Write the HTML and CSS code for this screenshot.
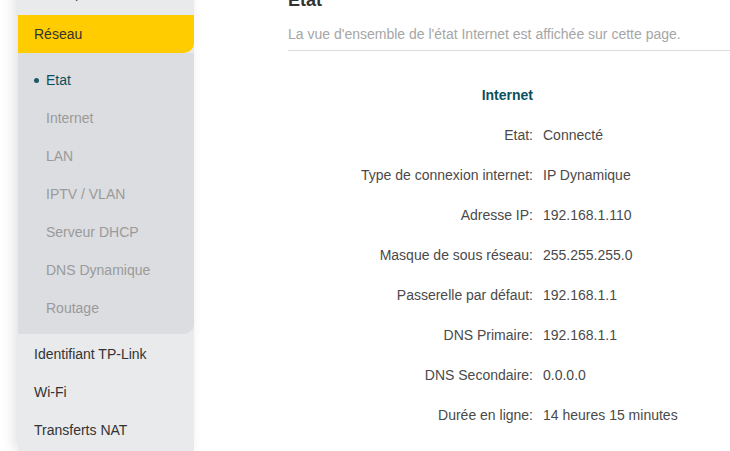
FILE: index.html
```html
<!DOCTYPE html>
<html lang="fr">
<head>
  <meta charset="UTF-8" />
  <meta name="viewport" content="width=device-width, initial-scale=1.0" />
  <title>Etat</title>
  <link rel="stylesheet" href="styles.css">
</head>
<body>
  <div class="page">
    <nav class="sidebar">
      <div class="nav-item nav-prev">Rapide</div>
      <div class="nav-item active">Réseau</div>
      <div class="submenu">
        <div class="sub-item current">Etat</div>
        <div class="sub-item">Internet</div>
        <div class="sub-item">LAN</div>
        <div class="sub-item">IPTV / VLAN</div>
        <div class="sub-item">Serveur DHCP</div>
        <div class="sub-item">DNS Dynamique</div>
        <div class="sub-item">Routage</div>
      </div>
      <div class="nav-item">Identifiant TP-Link</div>
      <div class="nav-item">Wi-Fi</div>
      <div class="nav-item">Transferts NAT</div>
    </nav>

    <main class="content">
      <h2 class="title">Etat</h2>
      <p class="desc">La vue d'ensemble de l'état Internet est affichée sur cette page.</p>

      <div class="status">
        <div class="status-title">Internet</div>
        <div class="status-row"><span class="label">Etat:</span><span class="value">Connecté</span></div>
        <div class="status-row"><span class="label">Type de connexion internet:</span><span class="value">IP Dynamique</span></div>
        <div class="status-row"><span class="label">Adresse IP:</span><span class="value">192.168.1.110</span></div>
        <div class="status-row"><span class="label">Masque de sous réseau:</span><span class="value">255.255.255.0</span></div>
        <div class="status-row"><span class="label">Passerelle par défaut:</span><span class="value">192.168.1.1</span></div>
        <div class="status-row"><span class="label">DNS Primaire:</span><span class="value">192.168.1.1</span></div>
        <div class="status-row"><span class="label">DNS Secondaire:</span><span class="value">0.0.0.0</span></div>
        <div class="status-row"><span class="label">Durée en ligne:</span><span class="value">14 heures 15 minutes</span></div>
      </div>
    </main>
  </div>
</body>
</html>
```

FILE: styles.css
```css
html, body {
  margin: 0;
  height: 100%;
  overflow: hidden;
  background: #fff;
  font-family: "Liberation Sans", Arial, sans-serif;
  font-size: 14px;
  color: #333;
}
.page {
  display: flex;
  height: 100%;
  padding-left: 18px;
}
.sidebar {
  width: 176px;
  flex-shrink: 0;
  background: #e9eaec;
  box-shadow: -4px 0 12px rgba(0, 0, 0, 0.12);
  margin-top: -23px;
  height: calc(100% + 23px);
}
.nav-item {
  height: 38px;
  line-height: 38px;
  padding-left: 16px;
  color: #333;
}
.nav-prev {
  padding-left: 39px;
  line-height: 33px;
  color: #2b4a6b;
}
.nav-item.active {
  background: #ffcc00;
  border-bottom-right-radius: 10px;
  color: #333;
}
.submenu {
  background: #dcdde0;
  border-bottom-right-radius: 10px;
  padding: 8px 0 7px;
  margin-bottom: 1px;
}
.sub-item {
  height: 38px;
  line-height: 38px;
  padding-left: 28px;
  color: #9a9a9a;
}
.sub-item.current {
  color: #0b4f5e;
  position: relative;
}
.sub-item.current::before {
  content: "";
  position: absolute;
  left: 16px;
  top: 17px;
  width: 5px;
  height: 5px;
  border-radius: 50%;
  background: #1f5866;
}
.content {
  margin-left: 94px;
  width: 460px;
  flex-shrink: 0;
}
.title {
  margin: -12px 0 0;
  font-size: 18px;
  line-height: 24px;
  font-weight: bold;
  color: #333;
}
.desc {
  margin: 12px 0 0;
  line-height: 20px;
  color: #a6a6a6;
  padding-bottom: 6px;
  border-bottom: 1px solid #dcdcdc;
}
.status {
  margin-top: 25px;
}
.status-title {
  width: 245px;
  height: 39px;
  line-height: 38px;
  text-align: right;
  font-weight: bold;
  color: #0b4f5e;
}
.status-row {
  display: flex;
  height: 40px;
  line-height: 40px;
}
.label {
  width: 245px;
  text-align: right;
  color: #4a4a4a;
}
.value {
  margin-left: 10px;
  color: #4a4a4a;
}
```
